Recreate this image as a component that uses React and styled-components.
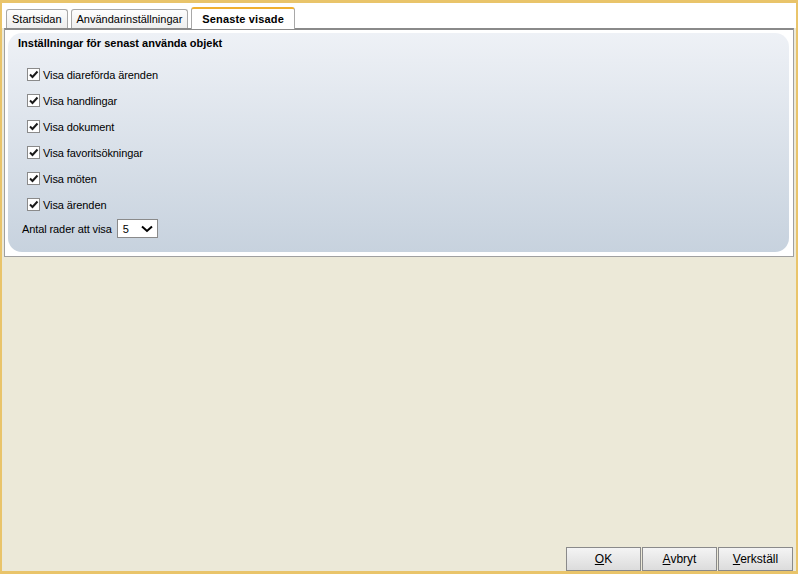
import React from "react";
import styled, { createGlobalStyle } from "styled-components";

const Global = createGlobalStyle`
  html, body { margin: 0; padding: 0; }
  body { font-family: "Liberation Sans", Arial, sans-serif; font-size: 11px; color: #000; }
  * { box-sizing: border-box; }
`;

const Window = styled.div`
  width: 798px;
  height: 574px;
  display: flex;
  flex-direction: column;
  background: #ece9d8;
  border-top: 3px solid #e9c46a;
  border-left: 2px solid #e9c46a;
  border-right: 2px solid #e9c46a;
  border-bottom: 3px solid #e9c46a;
  font-family: "Liberation Sans", Arial, sans-serif;
  font-size: 11px;
`;

const TabStrip = styled.div`
  height: 25px;
  background: #fff;
  display: flex;
  align-items: flex-end;
  gap: 3px;
  padding-left: 4px;
`;

const Tab = styled.div`
  height: ${(p) => (p.$active ? "22px" : "19px")};
  padding: 0 ${(p) => (p.$active ? "10px" : "5px")};
  display: flex;
  align-items: center;
  border: 1px solid #a8a8a8;
  border-bottom: none;
  border-top: ${(p) => (p.$active ? "2px solid #f0b030" : "1px solid #a8a8a8")};
  border-radius: 3px 3px 0 0;
  background: ${(p) => (p.$active ? "#fff" : "linear-gradient(#fdfdfd, #eeeeee)")};
  font-weight: ${(p) => (p.$active ? "bold" : "normal")};
  font-size: 11px;
  letter-spacing: ${(p) => (p.$active ? "0.15px" : "0")};
  margin-bottom: ${(p) => (p.$active ? "-1px" : "0")};
  position: relative;
  color: #000;
`;

const TabPanel = styled.div`
  margin: 0 2px 0 2px;
  height: 229px;
  border: 1px solid #a0a0a0;
  border-top: 2px solid #8a8a8a;
  background: #fff;
  padding: 3px 4px 4px 3px;
  display: flex;
`;

const GroupBox = styled.div`
  flex: 1;
  border-radius: 14px;
  background: linear-gradient(#eef1f6, #c7d2de);
  padding: 3px 0 0 10px;
  display: flex;
  flex-direction: column;
`;

const GroupTitle = styled.div`
  font-weight: bold;
  font-size: 11px;
  height: 14px;
  line-height: 14px;
  margin-bottom: 18px;
`;

const CheckRow = styled.label`
  display: flex;
  align-items: center;
  height: 13px;
  margin: 0 0 13px 9px;
  gap: 3px;
  letter-spacing: -0.1px;
`;

const Box = styled.span`
  width: 13px;
  height: 13px;
  border: 1px solid #8a8a8a;
  background: #fff;
  display: flex;
  align-items: center;
  justify-content: center;
`;

const SelectRow = styled.div`
  display: flex;
  align-items: center;
  gap: 5px;
  margin-left: 4px;
  margin-top: -5px;
  letter-spacing: -0.1px;
`;

const Select = styled.div`
  width: 41px;
  height: 19px;
  border: 1px solid #8a8a8a;
  background: #fff;
  display: flex;
  align-items: center;
  justify-content: space-between;
  padding: 0 4px 0 5px;
`;

const Spacer = styled.div`
  flex: 1;
`;

const ButtonRow = styled.div`
  display: flex;
  justify-content: flex-end;
  padding-right: 3px;
`;

const Button = styled.button`
  width: 75px;
  height: 24px;
  margin-left: 1px;
  border: 1px solid #8a8a8a;
  background: linear-gradient(#f4f4f4, #dcdcdc);
  font-family: "Liberation Sans", Arial, sans-serif;
  font-size: 12px;
  color: #000;
  padding: 0;
  u { text-decoration: underline; }
`;

const Check = () => (
  <svg width="10" height="9" viewBox="0 0 10 9">
    <path d="M1 4.5 L3.5 7 L8.5 1.5" stroke="#1a1a1a" strokeWidth="2" fill="none" />
  </svg>
);

const items = [
  "Visa diareförda ärenden",
  "Visa handlingar",
  "Visa dokument",
  "Visa favoritsökningar",
  "Visa möten",
  "Visa ärenden",
];

export default function App() {
  return (
    <>
      <Global />
      <Window>
        <TabStrip>
          <Tab>Startsidan</Tab>
          <Tab>Användarinställningar</Tab>
          <Tab $active>Senaste visade</Tab>
        </TabStrip>
        <TabPanel>
          <GroupBox>
            <GroupTitle>Inställningar för senast använda objekt</GroupTitle>
            {items.map((t) => (
              <CheckRow key={t}>
                <Box>
                  <Check />
                </Box>
                {t}
              </CheckRow>
            ))}
            <SelectRow>
              Antal rader att visa
              <Select>
                <span>5</span>
                <svg width="12" height="8" viewBox="0 0 12 8">
                  <path d="M1 1.5 L6 6 L11 1.5" stroke="#000" strokeWidth="2" fill="none" />
                </svg>
              </Select>
            </SelectRow>
          </GroupBox>
        </TabPanel>
        <Spacer />
        <ButtonRow>
          <Button><u>O</u>K</Button>
          <Button><u>A</u>vbryt</Button>
          <Button><u>V</u>erkställ</Button>
        </ButtonRow>
      </Window>
    </>
  );
}
